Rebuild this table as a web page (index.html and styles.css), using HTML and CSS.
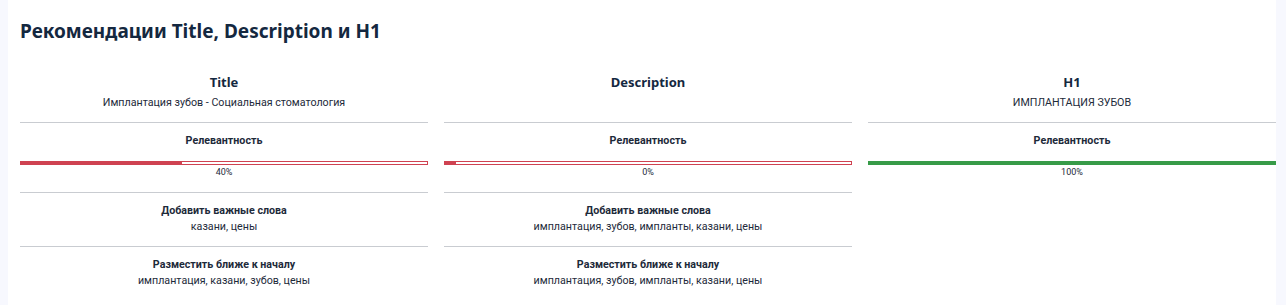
FILE: index.html
```html
<!DOCTYPE html>
<html lang="ru">
<head>
<meta charset="utf-8">
<link rel="stylesheet" href="styles.css">
</head>
<body>
<div class="panel">
  <h2 class="page-title">Рекомендации Title, Description и H1</h2>
  <div class="grid">
    <div class="col">
      <div class="sec head">
        <h3 class="col-title">Title</h3>
        <div class="col-sub">Имплантация зубов - Социальная стоматология</div>
      </div>
      <div class="sec rel">
        <div class="label">Релевантность</div>
        <div class="bar bad"><div class="fill" style="width:40%"></div></div>
        <div class="pct">40%</div>
      </div>
      <div class="sec words">
        <div class="label">Добавить важные слова</div>
        <div class="text">казани, цены</div>
      </div>
      <div class="sec words">
        <div class="label">Разместить ближе к началу</div>
        <div class="text">имплантация, казани, зубов, цены</div>
      </div>
    </div>
    <div class="col">
      <div class="sec head">
        <h3 class="col-title">Description</h3>
        <div class="col-sub"></div>
      </div>
      <div class="sec rel">
        <div class="label">Релевантность</div>
        <div class="bar bad"><div class="fill" style="width:3%"></div></div>
        <div class="pct">0%</div>
      </div>
      <div class="sec words">
        <div class="label">Добавить важные слова</div>
        <div class="text">имплантация, зубов, импланты, казани, цены</div>
      </div>
      <div class="sec words">
        <div class="label">Разместить ближе к началу</div>
        <div class="text">имплантация, зубов, импланты, казани, цены</div>
      </div>
    </div>
    <div class="col">
      <div class="sec head">
        <h3 class="col-title">H1</h3>
        <div class="col-sub">ИМПЛАНТАЦИЯ ЗУБОВ</div>
      </div>
      <div class="sec rel">
        <div class="label">Релевантность</div>
        <div class="bar good"><div class="fill" style="width:100%"></div></div>
        <div class="pct">100%</div>
      </div>
    </div>
  </div>
</div>
</body>
</html>
```

FILE: styles.css
```css
html, body {
  margin: 0;
  padding: 0;
  background: #f7f8fe;
  overflow: hidden;
}
body {
  font-family: Roboto, "Liberation Sans", sans-serif;
  color: #1d2a3a;
}
.panel {
  margin-left: 8px;
  width: 1268px;
  height: 100vh;
  padding: 17px 0 0 12px;
  box-sizing: border-box;
  background: #ffffff;
}
.page-title {
  margin: 0;
  font-family: "Noto Sans", "Open Sans", sans-serif;
  font-weight: 700;
  font-size: 19px;
  line-height: 28px;
  color: #142840;
}
.grid {
  margin-top: 28px;
  display: grid;
  grid-template-columns: repeat(3, 408px);
  column-gap: 16px;
}
.col {
  display: flex;
  flex-direction: column;
}
.sec {
  text-align: center;
}
.sec + .sec {
  border-top: 1px solid #c9ccd1;
}
.head {
  padding-bottom: 11px;
}
.col-title {
  margin: 0;
  font-family: "Noto Sans", "Open Sans", sans-serif;
  font-weight: 700;
  font-size: 13px;
  line-height: 18px;
  color: #142840;
}
.col-sub {
  margin-top: 4px;
  font-size: 10.7px;
  line-height: 16px;
  min-height: 16px;
}
.label {
  font-size: 10.7px;
  font-weight: 700;
  line-height: 16px;
}
.rel {
  padding: 10px 0 13px;
}
.bar {
  margin-top: 12px;
  height: 4px;
  box-sizing: border-box;
  background: #fff;
  display: flex;
}
.bar.bad {
  border: 1px solid #cf4251;
}
.bar.bad .fill {
  background: #cf4251;
  margin: -1px 0 -1px -1px;
}
.bar.good .fill {
  background: #379b48;
}
.fill {
  height: 4px;
}
.pct {
  font-size: 9px;
  line-height: 14px;
}
.words {
  padding: 10px 0 11px;
}
.text {
  font-size: 10.7px;
  line-height: 16px;
}
```
